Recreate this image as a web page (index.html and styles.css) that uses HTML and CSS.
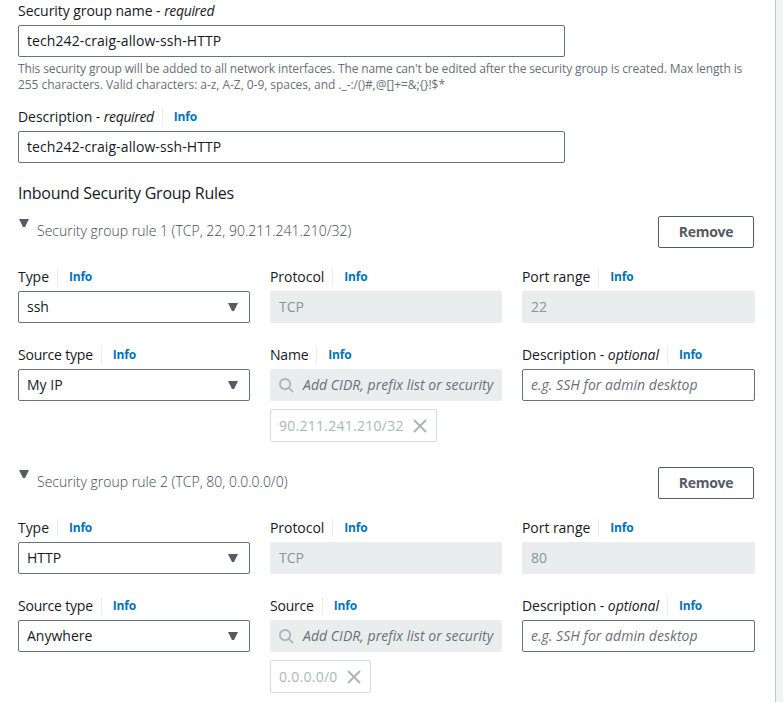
FILE: index.html
```
<!DOCTYPE html>
<html lang="en"><head><meta charset="utf-8"><title>Security group</title><link rel="stylesheet" href="styles.css"></head>
<body>
<main class="panel">
<div class="label"><span>Security group name - <i class="req">required</i></span></div>
<div class="input wide">tech242-craig-allow-ssh-HTTP</div>
<p class="hint">This security group will be added to all network interfaces. The name can't be edited after the security group is created. Max length is<br><span class="chars">255 characters. Valid characters: a-z, A-Z, 0-9, spaces, and ._-:/()#,@[]+=&amp;;{}!$*</span></p>
<div class="label desc"><span>Description - <i class="req">required</i></span><a class="info">Info</a></div>
<div class="input wide">tech242-craig-allow-ssh-HTTP</div>
<h3>Inbound Security Group Rules</h3>
<section class="rule">
<header><svg class="tri" viewBox="0 0 12 9"><path d="M1 0h10L7 8H5z"/></svg><span class="title">Security group rule 1 (TCP, 22, 90.211.241.210/32)</span><button>Remove</button></header>
<div class="grid">
<div><div class="label"><span>Type</span><a class="info">Info</a></div><div class="input">ssh<svg class="caret" viewBox="0 0 12 9"><path d="M1 0h10L7 8H5z"/></svg></div></div>
<div><div class="label"><span>Protocol</span><a class="info">Info</a></div><div class="input off">TCP</div></div>
<div><div class="label"><span>Port range</span><a class="info">Info</a></div><div class="input off">22</div></div>
<div><div class="label"><span class="tight">Source type</span><a class="info">Info</a></div><div class="input">My IP<svg class="caret" viewBox="0 0 12 9"><path d="M1 0h10L7 8H5z"/></svg></div></div>
<div><div class="label"><span class="tight">Name</span><a class="info">Info</a></div><div class="input off search"><svg class="glass" viewBox="0 0 16 16"><circle cx="6.5" cy="6.5" r="5.5"/><path d="M10.5 10.5l4.5 4.5"/></svg><i>Add CIDR, prefix list or security</i></div><div class="token">90.211.241.210/32<svg viewBox="0 0 14 14"><path d="M1 1l12 12M13 1L1 13"/></svg></div></div>
<div><div class="label"><span>Description - <i>optional</i></span><a class="info">Info</a></div><div class="input ph"><i>e.g. SSH for admin desktop</i></div></div>
</div></section>
<section class="rule">
<header><svg class="tri" viewBox="0 0 12 9"><path d="M1 0h10L7 8H5z"/></svg><span class="title">Security group rule 2 (TCP, 80, 0.0.0.0/0)</span><button>Remove</button></header>
<div class="grid">
<div><div class="label"><span>Type</span><a class="info">Info</a></div><div class="input">HTTP<svg class="caret" viewBox="0 0 12 9"><path d="M1 0h10L7 8H5z"/></svg></div></div>
<div><div class="label"><span>Protocol</span><a class="info">Info</a></div><div class="input off">TCP</div></div>
<div><div class="label"><span>Port range</span><a class="info">Info</a></div><div class="input off">80</div></div>
<div><div class="label"><span class="tight">Source type</span><a class="info">Info</a></div><div class="input">Anywhere<svg class="caret" viewBox="0 0 12 9"><path d="M1 0h10L7 8H5z"/></svg></div></div>
<div><div class="label"><span class="tight">Source</span><a class="info">Info</a></div><div class="input off search"><svg class="glass" viewBox="0 0 16 16"><circle cx="6.5" cy="6.5" r="5.5"/><path d="M10.5 10.5l4.5 4.5"/></svg><i>Add CIDR, prefix list or security</i></div><div class="token">0.0.0.0/0<svg viewBox="0 0 14 14"><path d="M1 1l12 12M13 1L1 13"/></svg></div></div>
<div><div class="label"><span>Description - <i>optional</i></span><a class="info">Info</a></div><div class="input ph"><i>e.g. SSH for admin desktop</i></div></div>
</div></section>
</main>
</body></html>
```
FILE: styles.css
```
* { box-sizing: border-box; }
body { margin: 0; background: #f2f3f3; font: 14px/22px "Open Sans", "Noto Sans", sans-serif; color: #16191f; overflow: hidden; }
.panel { width: 776px; height: 702px; background: #fff; border-right: 1px solid #c3c8c8; padding: 0 0 0 18px; overflow: hidden; }
.label { display: flex; align-items: center; height: 22px; padding-top: 1px; margin-bottom: 4px; white-space: nowrap; letter-spacing: -0.05px; }
.panel > .label:first-child { margin-top: -1px; }
.req { letter-spacing: -0.35px; }
.tight { letter-spacing: -0.2px; }
.info { color: #0073bb; font-size: 12px; font-weight: 700; line-height: 18px; letter-spacing: -0.2px; border-left: 1px solid #eaeded; margin-left: 8px; padding-left: 11px; }
.input { display: flex; align-items: center; height: 32px; border: 1px solid #687078; border-radius: 2px; padding: 0 8px; white-space: nowrap; overflow: hidden; }
.wide { width: 547px; letter-spacing: 0.09px; }
.hint { margin: 4px 0 12px; font-size: 12px; line-height: 16px; color: #687078; white-space: nowrap; letter-spacing: -0.125px; }
.chars { letter-spacing: -0.05px; }
h3 { margin: 19px 0 0; font-size: 16px; line-height: 22px; font-weight: 400; letter-spacing: -0.25px; }
.rule { height: 251px; }
.rule header { display: flex; height: 32px; margin-top: 12px; }
.rule + .rule header { margin-top: 0; }
.tri { width: 12px; height: 9px; margin-top: 3px; fill: #545b64; }
.title { margin: 4px 0 0 7px; color: #414850; font-weight: 300; }
button { width: 96px; height: 32px; margin: 0 21px 0 auto; border: 1px solid #545b64; border-radius: 2px; background: #fff; color: #545b64; font: 700 14px/20px "Open Sans", sans-serif; letter-spacing: -0.3px; padding: 0; }
.grid { display: grid; grid-template-columns: 232px 232px 233px; column-gap: 20px; row-gap: 20px; margin-top: 17px; grid-template-rows: 58px auto; }
.caret { width: 12px; height: 9px; margin: 0 2px 0 auto; fill: #545b64; }
.off { background: #eaeded; border-color: #eaeded; color: #879596; }
.ph, .search { color: #687078; letter-spacing: 0.04px; }
.glass { width: 15px; height: 15px; margin-right: 9px; flex: none; fill: none; stroke: #aab7b8; stroke-width: 2; }
.token { display: inline-flex; align-items: center; height: 33px; margin-top: 8px; border: 1px solid #d5dbdb; border-radius: 2px; padding: 0 9px 0 8px; color: #aab7b8; letter-spacing: 0.27px; }
.token svg { width: 14px; height: 14px; margin-left: 9px; stroke: #aab7b8; stroke-width: 2; fill: none; }
```
